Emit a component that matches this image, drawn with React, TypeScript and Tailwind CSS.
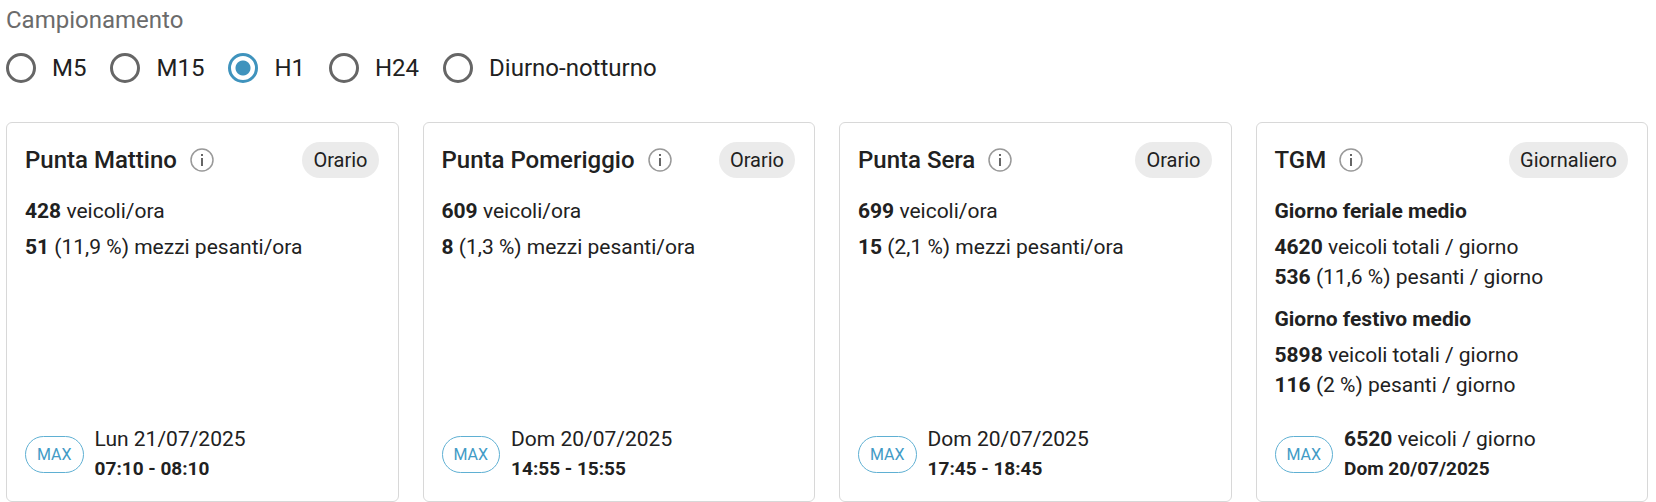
import { useState } from 'react'

type Line = {
  value?: string
  text?: string
  heading?: string
}

type Card = {
  title: string
  chip: string
  info: string
  groups: Line[][]
  maxValue?: string
  maxText: string
  maxDetail: string
}

const samplings = ['M5', 'M15', 'H1', 'H24', 'Diurno-notturno']

const cards: Card[] = [
  {
    title: 'Punta Mattino',
    chip: 'Orario',
    info: 'Informazioni su Punta Mattino',
    groups: [[{ value: '428', text: 'veicoli/ora' }], [{ value: '51', text: '(11,9 %) mezzi pesanti/ora' }]],
    maxText: 'Lun 21/07/2025',
    maxDetail: '07:10 - 08:10',
  },
  {
    title: 'Punta Pomeriggio',
    chip: 'Orario',
    info: 'Informazioni su Punta Pomeriggio',
    groups: [[{ value: '609', text: 'veicoli/ora' }], [{ value: '8', text: '(1,3 %) mezzi pesanti/ora' }]],
    maxText: 'Dom 20/07/2025',
    maxDetail: '14:55 - 15:55',
  },
  {
    title: 'Punta Sera',
    chip: 'Orario',
    info: 'Informazioni su Punta Sera',
    groups: [[{ value: '699', text: 'veicoli/ora' }], [{ value: '15', text: '(2,1 %) mezzi pesanti/ora' }]],
    maxText: 'Dom 20/07/2025',
    maxDetail: '17:45 - 18:45',
  },
  {
    title: 'TGM',
    chip: 'Giornaliero',
    info: 'Informazioni su TGM',
    groups: [
      [{ heading: 'Giorno feriale medio' }],
      [
        { value: '4620', text: 'veicoli totali / giorno' },
        { value: '536', text: '(11,6 %) pesanti / giorno' },
      ],
      [{ heading: 'Giorno festivo medio' }],
      [
        { value: '5898', text: 'veicoli totali / giorno' },
        { value: '116', text: '(2 %) pesanti / giorno' },
      ],
    ],
    maxValue: '6520',
    maxText: 'veicoli / giorno',
    maxDetail: 'Dom 20/07/2025',
  },
]

function StatCard({ card }: { card: Card }) {
  return (
    <section className="flex flex-col rounded-md border border-[#d8d8d8] pt-[19px] pr-[19px] pb-[17px] pl-[18px]">
      <div className="flex items-center justify-between">
        <div className="flex items-center gap-[13px]">
          <h2 className="text-2xl leading-9 font-medium">{card.title}</h2>
          <button type="button" aria-label={card.info}>
            <svg width="24" height="24" viewBox="0 0 24 24" fill="none">
              <circle cx="12" cy="12" r="11" stroke="#999" strokeWidth="1.5" />
              <path d="M12 10v8" stroke="#555" strokeWidth="1.8" />
              <path d="M12 6v2" stroke="#555" strokeWidth="1.8" />
            </svg>
          </button>
        </div>
        <span className="rounded-full bg-[#ebebeb] px-[11px] text-xl leading-9">{card.chip}</span>
      </div>

      <div className="mt-[18px] flex flex-col gap-[6px] text-[21px] leading-[30px]">
        {card.groups.map((group, i) => (
          <div key={i} className={i === 2 ? 'mt-[6px]' : ''}>
            {group.map((line, j) =>
              line.heading ? (
                <h3 key={j} className="font-bold">
                  {line.heading}
                </h3>
              ) : (
                <p key={j}>
                  <b>{line.value}</b> {line.text}
                </p>
              )
            )}
          </div>
        ))}
      </div>

      <div className="mt-auto flex items-center gap-[11px] pt-6">
        <span className="rounded-full border border-[#5fb0d3] px-[11px] text-base leading-[35px] text-[#429bc6]">
          MAX
        </span>
        <div>
          <p className="text-[21px] leading-[30px]">
            {card.maxValue && <b>{card.maxValue} </b>}
            {card.maxText}
          </p>
          <p className="text-[19px] leading-[30px] font-bold">{card.maxDetail}</p>
        </div>
      </div>
    </section>
  )
}

export default function App() {
  const [sampling, setSampling] = useState('H1')

  return (
    <main className="bg-white pt-1 pr-2 pl-[6px] font-['Roboto',sans-serif] text-[#212121]">
      <fieldset>
        <legend className="text-2xl leading-8 text-[#6b6b6b]">Campionamento</legend>
        <div className="mt-4 flex items-center gap-6">
          {samplings.map((name) => (
            <label key={name} className="flex items-center gap-4 text-2xl leading-8">
              <input
                type="radio"
                name="sampling"
                value={name}
                checked={sampling === name}
                onChange={() => setSampling(name)}
                className="size-[30px] appearance-none rounded-full border-3 border-[#666] checked:border-[#3f93bd] checked:bg-[radial-gradient(circle,#3f93bd_7px,transparent_8px)]"
              />
              {name}
            </label>
          ))}
        </div>
      </fieldset>

      <div className="mt-[38px] grid grid-cols-4 gap-6">
        {cards.map((card) => (
          <StatCard key={card.title} card={card} />
        ))}
      </div>
    </main>
  )
}
